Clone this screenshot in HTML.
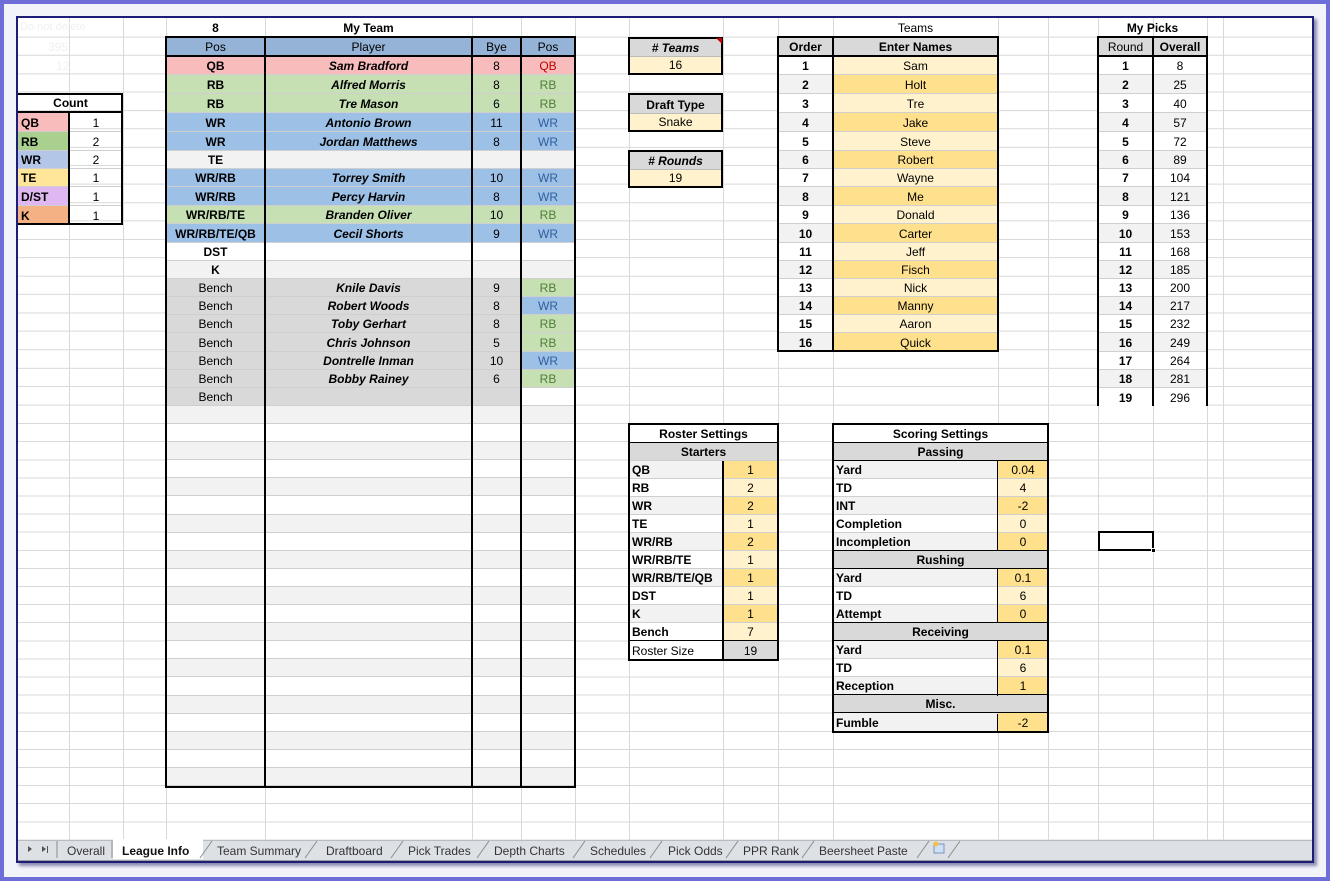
<!DOCTYPE html>
<html><head><meta charset="utf-8"><style>
*{box-sizing:border-box;margin:0;padding:0}
body{width:1330px;height:881px;position:relative;overflow:hidden;background:#f3f3fa;font-family:"Liberation Sans",sans-serif;font-size:12px;color:#000}
.a{position:absolute}
#outer{left:0;top:0;width:1330px;height:881px;border:4px solid #6e6ed8}
#sheet{left:16px;top:16px;width:1298px;height:847px;border:2px solid #1e1e78;background:#fff;overflow:hidden;box-shadow:3px 3px 3px #8a8ab0}
.grid{left:0;top:0;width:1294px;height:822px;
 background-image:
 repeating-linear-gradient(to bottom,transparent 0,transparent 17.4px,#d9d9d9 17.4px,#d9d9d9 18.4px);
 background-position:0 1px;}
.grid2{left:0;top:388px;width:1294px;height:436px;background:#fff;
 background-image:repeating-linear-gradient(to bottom,transparent 0,transparent 17.1px,#d9d9d9 17.1px,#d9d9d9 18.1px);}
.vl{position:absolute;top:0;width:1px;height:822px;background:#d9d9d9}
.t{position:absolute;display:flex;flex-direction:column}
.r{display:flex;border-bottom:1px solid #cfcfcf}
.r>div{text-align:center;display:flex;align-items:center;justify-content:center;white-space:nowrap;padding-top:1px}
.b{font-weight:bold}
.bi{font-weight:bold;font-style:italic}
.L{justify-content:flex-start!important;padding-left:3px}
.bk{position:absolute;background:#000}
.pk{background:#f8bcbc}.gr{background:#c6e0b4}.bl{background:#9dc0e6}.lg{background:#f2f2f2}.gy{background:#d9d9d9}.wh{background:#fff}
.y1{background:#fff2cc}.y2{background:#ffe08c}
.hb{background:#95b3d7}
.tr{color:#c00000}.tg{color:#4f7d35}.tb{color:#2f5f9e}
.tab{position:absolute;top:844px;font-size:12px;color:#333}
</style></head><body>
<div class="a" id="outer"></div>
<div class="a" id="sheet">
<div class="a grid"></div>
<div class="a grid2"></div>
<div class="vl" style="left:51px"></div><div class="vl" style="left:105px"></div><div class="vl" style="left:148px"></div><div class="vl" style="left:247px"></div><div class="vl" style="left:454px"></div><div class="vl" style="left:503px"></div><div class="vl" style="left:557px"></div><div class="vl" style="left:611px"></div><div class="vl" style="left:705px"></div><div class="vl" style="left:760px"></div><div class="vl" style="left:815px"></div><div class="vl" style="left:980px"></div><div class="vl" style="left:1030px"></div><div class="vl" style="left:1080px"></div><div class="vl" style="left:1135px"></div><div class="vl" style="left:1189px"></div><div class="vl" style="left:1205px"></div>
<div class="a" style="left:0;top:822px;width:1294px;height:21px;background:#dde1e6;border-top:1px solid #b8bcc2;border-bottom:1px solid #9aa0a0"></div>
</div>

<div class="a" style="left:20px;top:21px;color:#f0f0f0;font-size:11px">Do not delete</div>
<div class="a" style="left:48px;top:40px;color:#f0f0f0">395</div>
<div class="a" style="left:56px;top:59px;color:#f0f0f0">12</div>

<div class="a b" style="left:166px;top:21px;width:99px;text-align:center">8</div>
<div class="a b" style="left:265px;top:21px;width:207px;text-align:center">My Team</div>
<div class="a" style="left:833px;top:21px;width:165px;text-align:center">Teams</div>
<div class="a b" style="left:1098px;top:21px;width:109px;text-align:center">My Picks</div>

<!-- Count table -->
<div class="t" style="left:18px;top:94px;width:105px">
<div class="r" style="height:19px;border-bottom:2px solid #000"><div style="width:105px" class="b">Count</div></div>
<div class="r" style="height:19px"><div class="pk L b" style="width:51px">QB</div><div style="width:54px">1</div></div>
<div class="r" style="height:19px"><div class="gr L b" style="width:51px;background:#a9d08e">RB</div><div style="width:54px">2</div></div>
<div class="r" style="height:18px"><div class="L b" style="width:51px;background:#b4c6e7">WR</div><div style="width:54px">2</div></div>
<div class="r" style="height:18px"><div class="L b" style="width:51px;background:#ffe699">TE</div><div style="width:54px">1</div></div>
<div class="r" style="height:19px"><div class="L b" style="width:51px;background:#dfb8f2">D/ST</div><div style="width:54px">1</div></div>
<div class="r" style="height:18px;border:0"><div class="L b" style="width:51px;background:#f4b183">K</div><div style="width:54px">1</div></div>
</div>
<div class="bk" style="left:18px;top:93px;width:105px;height:2px"></div>
<div class="bk" style="left:18px;top:223px;width:105px;height:2px"></div>
<div class="bk" style="left:121px;top:93px;width:2px;height:132px"></div>
<div class="bk" style="left:68px;top:113px;width:2px;height:111px"></div>

<!-- Team table -->
<div class="t" style="left:166px;top:37px;width:409px">
<div class="r hb" style="height:19px"><div style="width:99px">Pos</div><div style="width:207px">Player</div><div style="width:49px">Bye</div><div style="width:54px">Pos</div></div>
<div class="r pk" style="height:19px"><div class="b" style="width:99px">QB</div><div class="bi" style="width:207px">Sam Bradford</div><div style="width:49px">8</div><div class="tr" style="width:54px">QB</div></div>
<div class="r gr" style="height:19px"><div class="b" style="width:99px">RB</div><div class="bi" style="width:207px">Alfred Morris</div><div style="width:49px">8</div><div class="tg" style="width:54px">RB</div></div>
<div class="r gr" style="height:19px"><div class="b" style="width:99px">RB</div><div class="bi" style="width:207px">Tre Mason</div><div style="width:49px">6</div><div class="tg" style="width:54px">RB</div></div>
<div class="r bl" style="height:19px"><div class="b" style="width:99px">WR</div><div class="bi" style="width:207px">Antonio Brown</div><div style="width:49px">11</div><div class="tb" style="width:54px">WR</div></div>
<div class="r bl" style="height:19px"><div class="b" style="width:99px">WR</div><div class="bi" style="width:207px">Jordan Matthews</div><div style="width:49px">8</div><div class="tb" style="width:54px">WR</div></div>
<div class="r lg" style="height:18px"><div class="b" style="width:99px">TE</div><div style="width:207px"></div><div style="width:49px"></div><div style="width:54px"></div></div>
<div class="r bl" style="height:18px"><div class="b" style="width:99px">WR/RB</div><div class="bi" style="width:207px">Torrey Smith</div><div style="width:49px">10</div><div class="tb" style="width:54px">WR</div></div>
<div class="r bl" style="height:19px"><div class="b" style="width:99px">WR/RB</div><div class="bi" style="width:207px">Percy Harvin</div><div style="width:49px">8</div><div class="tb" style="width:54px">WR</div></div>
<div class="r gr" style="height:18px"><div class="b" style="width:99px">WR/RB/TE</div><div class="bi" style="width:207px">Branden Oliver</div><div style="width:49px">10</div><div class="tg" style="width:54px">RB</div></div>
<div class="r bl" style="height:19px"><div class="b" style="width:99px">WR/RB/TE/QB</div><div class="bi" style="width:207px">Cecil Shorts</div><div style="width:49px">9</div><div class="tb" style="width:54px">WR</div></div>
<div class="r wh" style="height:18px"><div class="b" style="width:99px">DST</div><div style="width:207px"></div><div style="width:49px"></div><div style="width:54px"></div></div>
<div class="r lg" style="height:18px"><div class="b" style="width:99px">K</div><div style="width:207px"></div><div style="width:49px"></div><div style="width:54px"></div></div>
<div class="r gy" style="height:18px"><div style="width:99px">Bench</div><div class="bi" style="width:207px">Knile Davis</div><div style="width:49px">9</div><div class="tg gr" style="width:54px">RB</div></div>
<div class="r gy" style="height:18px"><div style="width:99px">Bench</div><div class="bi" style="width:207px">Robert Woods</div><div style="width:49px">8</div><div class="tb bl" style="width:54px">WR</div></div>
<div class="r gy" style="height:18px"><div style="width:99px">Bench</div><div class="bi" style="width:207px">Toby Gerhart</div><div style="width:49px">8</div><div class="tg gr" style="width:54px">RB</div></div>
<div class="r gy" style="height:19px"><div style="width:99px">Bench</div><div class="bi" style="width:207px">Chris Johnson</div><div style="width:49px">5</div><div class="tg gr" style="width:54px">RB</div></div>
<div class="r gy" style="height:18px"><div style="width:99px">Bench</div><div class="bi" style="width:207px">Dontrelle Inman</div><div style="width:49px">10</div><div class="tb bl" style="width:54px">WR</div></div>
<div class="r gy" style="height:18px"><div style="width:99px">Bench</div><div class="bi" style="width:207px">Bobby Rainey</div><div style="width:49px">6</div><div class="tg gr" style="width:54px">RB</div></div>
<div class="r gy" style="height:18px"><div style="width:99px">Bench</div><div style="width:207px"></div><div style="width:49px"></div><div class="wh" style="width:54px"></div></div>
<div class="r lg" style="height:18.1px"></div><div class="r wh" style="height:18.1px"></div><div class="r lg" style="height:18.1px"></div><div class="r wh" style="height:18.1px"></div><div class="r lg" style="height:18.1px"></div><div class="r wh" style="height:18.1px"></div><div class="r lg" style="height:18.1px"></div><div class="r wh" style="height:18.1px"></div><div class="r lg" style="height:18.1px"></div><div class="r wh" style="height:18.1px"></div><div class="r lg" style="height:18.1px"></div><div class="r wh" style="height:18.1px"></div><div class="r lg" style="height:18.1px"></div><div class="r wh" style="height:18.1px"></div><div class="r lg" style="height:18.1px"></div><div class="r wh" style="height:18.1px"></div><div class="r lg" style="height:18.1px"></div><div class="r wh" style="height:18.1px"></div><div class="r lg" style="height:18.1px"></div><div class="r wh" style="height:18.1px"></div><div class="r lg" style="height:18.1px"></div>
</div>
<div class="bk" style="left:165px;top:36px;width:411px;height:2px"></div>
<div class="bk" style="left:165px;top:55px;width:411px;height:2px"></div>
<div class="bk" style="left:165px;top:786px;width:411px;height:2px"></div>
<div class="bk" style="left:165px;top:36px;width:2px;height:752px"></div>
<div class="bk" style="left:264px;top:36px;width:2px;height:752px"></div>
<div class="bk" style="left:471px;top:36px;width:2px;height:752px"></div>
<div class="bk" style="left:520px;top:36px;width:2px;height:752px"></div>
<div class="bk" style="left:574px;top:36px;width:2px;height:752px"></div>

<!-- settings boxes -->
<div class="a" style="left:628px;top:37px;width:95px;height:38px;border:2px solid #000">
 <div class="gy bi" style="height:18px;text-align:center;font-size:12px;line-height:19px;border-bottom:1px solid #bbb">#&nbsp;Teams</div>
 <div class="y1" style="height:16px;text-align:center;line-height:17px">16</div>
 <div class="a" style="right:-1px;top:-1px;width:0;height:0;border-top:6px solid #c00000;border-left:6px solid transparent"></div>
</div>
<div class="a" style="left:628px;top:93px;width:95px;height:39px;border:2px solid #000">
 <div class="gy b" style="height:19px;text-align:center;line-height:20px;border-bottom:1px solid #bbb">Draft Type</div>
 <div class="y1" style="height:16px;text-align:center;line-height:17px">Snake</div>
</div>
<div class="a" style="left:628px;top:150px;width:95px;height:38px;border:2px solid #000">
 <div class="gy bi" style="height:18px;text-align:center;font-size:12px;line-height:19px;border-bottom:1px solid #bbb">#&nbsp;Rounds</div>
 <div class="y1" style="height:16px;text-align:center;line-height:17px">19</div>
</div>

<!-- Teams table -->
<div class="t" style="left:778px;top:37px;width:220px">
<div class="r gy b" style="height:19px"><div style="width:55px">Order</div><div style="width:165px">Enter Names</div></div>
<div class="r" style="height:19px"><div class="b wh" style="width:55px">1</div><div class="y1" style="width:165px">Sam</div></div>
<div class="r" style="height:19px"><div class="b lg" style="width:55px">2</div><div class="y2" style="width:165px">Holt</div></div>
<div class="r" style="height:19px"><div class="b wh" style="width:55px">3</div><div class="y1" style="width:165px">Tre</div></div>
<div class="r" style="height:19px"><div class="b lg" style="width:55px">4</div><div class="y2" style="width:165px">Jake</div></div>
<div class="r" style="height:19px"><div class="b wh" style="width:55px">5</div><div class="y1" style="width:165px">Steve</div></div>
<div class="r" style="height:18px"><div class="b lg" style="width:55px">6</div><div class="y2" style="width:165px">Robert</div></div>
<div class="r" style="height:18px"><div class="b wh" style="width:55px">7</div><div class="y1" style="width:165px">Wayne</div></div>
<div class="r" style="height:19px"><div class="b lg" style="width:55px">8</div><div class="y2" style="width:165px">Me</div></div>
<div class="r" style="height:18px"><div class="b wh" style="width:55px">9</div><div class="y1" style="width:165px">Donald</div></div>
<div class="r" style="height:19px"><div class="b lg" style="width:55px">10</div><div class="y2" style="width:165px">Carter</div></div>
<div class="r" style="height:18px"><div class="b wh" style="width:55px">11</div><div class="y1" style="width:165px">Jeff</div></div>
<div class="r" style="height:18px"><div class="b lg" style="width:55px">12</div><div class="y2" style="width:165px">Fisch</div></div>
<div class="r" style="height:18px"><div class="b wh" style="width:55px">13</div><div class="y1" style="width:165px">Nick</div></div>
<div class="r" style="height:18px"><div class="b lg" style="width:55px">14</div><div class="y2" style="width:165px">Manny</div></div>
<div class="r" style="height:18px"><div class="b wh" style="width:55px">15</div><div class="y1" style="width:165px">Aaron</div></div>
<div class="r" style="height:19px;border:0"><div class="b lg" style="width:55px">16</div><div class="y2" style="width:165px">Quick</div></div>
</div>
<div class="bk" style="left:777px;top:36px;width:222px;height:2px"></div>
<div class="bk" style="left:777px;top:55px;width:222px;height:2px"></div>
<div class="bk" style="left:777px;top:350px;width:222px;height:2px"></div>
<div class="bk" style="left:777px;top:36px;width:2px;height:316px"></div>
<div class="bk" style="left:832px;top:36px;width:2px;height:316px"></div>
<div class="bk" style="left:997px;top:36px;width:2px;height:316px"></div>

<!-- My Picks -->
<div class="t" style="left:1098px;top:37px;width:109px">
<div class="r gy" style="height:19px"><div style="width:55px">Round</div><div class="b" style="width:54px">Overall</div></div>
<div class="r wh" style="height:19px"><div class="b" style="width:55px">1</div><div style="width:54px">8</div></div>
<div class="r lg" style="height:19px"><div class="b" style="width:55px">2</div><div style="width:54px">25</div></div>
<div class="r wh" style="height:19px"><div class="b" style="width:55px">3</div><div style="width:54px">40</div></div>
<div class="r lg" style="height:19px"><div class="b" style="width:55px">4</div><div style="width:54px">57</div></div>
<div class="r wh" style="height:19px"><div class="b" style="width:55px">5</div><div style="width:54px">72</div></div>
<div class="r lg" style="height:18px"><div class="b" style="width:55px">6</div><div style="width:54px">89</div></div>
<div class="r wh" style="height:18px"><div class="b" style="width:55px">7</div><div style="width:54px">104</div></div>
<div class="r lg" style="height:19px"><div class="b" style="width:55px">8</div><div style="width:54px">121</div></div>
<div class="r wh" style="height:18px"><div class="b" style="width:55px">9</div><div style="width:54px">136</div></div>
<div class="r lg" style="height:19px"><div class="b" style="width:55px">10</div><div style="width:54px">153</div></div>
<div class="r wh" style="height:18px"><div class="b" style="width:55px">11</div><div style="width:54px">168</div></div>
<div class="r lg" style="height:18px"><div class="b" style="width:55px">12</div><div style="width:54px">185</div></div>
<div class="r wh" style="height:18px"><div class="b" style="width:55px">13</div><div style="width:54px">200</div></div>
<div class="r lg" style="height:18px"><div class="b" style="width:55px">14</div><div style="width:54px">217</div></div>
<div class="r wh" style="height:18px"><div class="b" style="width:55px">15</div><div style="width:54px">232</div></div>
<div class="r lg" style="height:19px"><div class="b" style="width:55px">16</div><div style="width:54px">249</div></div>
<div class="r wh" style="height:18px"><div class="b" style="width:55px">17</div><div style="width:54px">264</div></div>
<div class="r lg" style="height:18px"><div class="b" style="width:55px">18</div><div style="width:54px">281</div></div>
<div class="r wh" style="height:18px;border:0"><div class="b" style="width:55px">19</div><div style="width:54px">296</div></div>
</div>
<div class="bk" style="left:1097px;top:36px;width:111px;height:2px"></div>
<div class="bk" style="left:1097px;top:55px;width:111px;height:2px"></div>
<div class="bk" style="left:1097px;top:36px;width:2px;height:370px"></div>
<div class="bk" style="left:1152px;top:36px;width:2px;height:370px"></div>
<div class="bk" style="left:1206px;top:36px;width:2px;height:370px"></div>

<div class="a" style="left:1098px;top:531px;width:56px;height:20px;border:2px solid #000"></div>
<div class="a" style="left:1151px;top:548px;width:5px;height:5px;background:#000;border:1px solid #fff"></div>

<!-- Roster Settings -->
<div class="t" style="left:629px;top:424px;width:149px">
<div class="r wh b" style="height:19px;border-bottom:1px solid #000"><div style="width:149px">Roster Settings</div></div>
<div class="r gy b" style="height:18px"><div style="width:149px">Starters</div></div>
<div class="r" style="height:18px"><div class="lg b L" style="width:94px">QB</div><div class="y2" style="width:55px">1</div></div>
<div class="r" style="height:18px"><div class="wh b L" style="width:94px">RB</div><div class="y1" style="width:55px">2</div></div>
<div class="r" style="height:18px"><div class="lg b L" style="width:94px">WR</div><div class="y2" style="width:55px">2</div></div>
<div class="r" style="height:18px"><div class="wh b L" style="width:94px">TE</div><div class="y1" style="width:55px">1</div></div>
<div class="r" style="height:18px"><div class="lg b L" style="width:94px">WR/RB</div><div class="y2" style="width:55px">2</div></div>
<div class="r" style="height:18px"><div class="wh b L" style="width:94px">WR/RB/TE</div><div class="y1" style="width:55px">1</div></div>
<div class="r" style="height:18px"><div class="lg b L" style="width:94px">WR/RB/TE/QB</div><div class="y2" style="width:55px">1</div></div>
<div class="r" style="height:18px"><div class="wh b L" style="width:94px">DST</div><div class="y1" style="width:55px">1</div></div>
<div class="r" style="height:18px"><div class="lg b L" style="width:94px">K</div><div class="y2" style="width:55px">1</div></div>
<div class="r" style="height:18px;border-bottom:1px solid #000"><div class="wh b L" style="width:94px">Bench</div><div class="y1" style="width:55px">7</div></div>
<div class="r" style="height:18px;border:0"><div class="wh L" style="width:94px">Roster Size</div><div class="gy" style="width:55px">19</div></div>
</div>
<div class="a" style="left:628px;top:423px;width:151px;height:238px;border:2px solid #000"></div>
<div class="bk" style="left:722px;top:461px;width:2px;height:199px"></div>

<!-- Scoring Settings -->
<div class="t" style="left:833px;top:424px;width:215px">
<div class="r wh b" style="height:19px;border-bottom:1px solid #000"><div style="width:215px">Scoring Settings</div></div>
<div class="r gy b" style="height:18px;border-bottom:1px solid #000"><div style="width:215px">Passing</div></div>
<div class="r" style="height:18px"><div class="lg b L" style="width:165px">Yard</div><div class="y2" style="width:50px">0.04</div></div>
<div class="r" style="height:18px"><div class="wh b L" style="width:165px">TD</div><div class="y1" style="width:50px">4</div></div>
<div class="r" style="height:18px"><div class="lg b L" style="width:165px">INT</div><div class="y2" style="width:50px">-2</div></div>
<div class="r" style="height:18px"><div class="wh b L" style="width:165px">Completion</div><div class="y1" style="width:50px">0</div></div>
<div class="r" style="height:18px;border-bottom:1px solid #000"><div class="lg b L" style="width:165px">Incompletion</div><div class="y2" style="width:50px">0</div></div>
<div class="r gy b" style="height:18px;border-bottom:1px solid #000"><div style="width:215px">Rushing</div></div>
<div class="r" style="height:18px"><div class="lg b L" style="width:165px">Yard</div><div class="y2" style="width:50px">0.1</div></div>
<div class="r" style="height:18px"><div class="wh b L" style="width:165px">TD</div><div class="y1" style="width:50px">6</div></div>
<div class="r" style="height:18px;border-bottom:1px solid #000"><div class="lg b L" style="width:165px">Attempt</div><div class="y2" style="width:50px">0</div></div>
<div class="r gy b" style="height:18px;border-bottom:1px solid #000"><div style="width:215px">Receiving</div></div>
<div class="r" style="height:18px"><div class="lg b L" style="width:165px">Yard</div><div class="y2" style="width:50px">0.1</div></div>
<div class="r" style="height:18px"><div class="wh b L" style="width:165px">TD</div><div class="y1" style="width:50px">6</div></div>
<div class="r" style="height:18px;border-bottom:1px solid #000"><div class="lg b L" style="width:165px">Reception</div><div class="y2" style="width:50px">1</div></div>
<div class="r gy b" style="height:18px;border-bottom:1px solid #000"><div style="width:215px">Misc.</div></div>
<div class="r" style="height:18px;border:0"><div class="lg b L" style="width:165px">Fumble</div><div class="y2" style="width:50px">-2</div></div>
</div>
<div class="a" style="left:832px;top:423px;width:217px;height:310px;border:2px solid #000"></div>
<div class="bk" style="left:997px;top:461px;width:1px;height:90px"></div>
<div class="bk" style="left:997px;top:569px;width:1px;height:54px"></div>
<div class="bk" style="left:997px;top:641px;width:1px;height:55px"></div>
<div class="bk" style="left:997px;top:714px;width:1px;height:18px"></div>

<!-- tabs -->
<div class="a" style="left:113px;top:839px;width:90px;height:20px;background:#fff"></div>
<svg class="a" style="left:0;top:838px" width="1000" height="22">
 <path d="M28 8 l4 3 l-4 3z M42 8 l4 3 l-4 3z" fill="#555"/><rect x="47" y="8" width="1" height="7" fill="#555"/>
 <g stroke="#8a8a8a" fill="none">
 <path d="M57 3 V20"/><path d="M112 3 V20"/><path d="M200 20 L212 3"/><path d="M305 20 L317 3"/><path d="M391 20 L403 3"/><path d="M477 20 L489 3"/><path d="M573 20 L585 3"/><path d="M650 20 L662 3"/><path d="M726 20 L738 3"/><path d="M802 20 L814 3"/><path d="M917 20 L929 3"/><path d="M948 20 L960 3"/>
 </g>
 <rect x="934" y="6" width="10" height="9" fill="#cfe0f5" stroke="#7a94b8"/><circle cx="936" cy="6" r="2.5" fill="#f3c340"/>
</svg>
<div class="tab" style="left:67px">Overall</div>
<div class="tab b" style="left:122px;color:#111">League Info</div>
<div class="tab" style="left:217px">Team Summary</div>
<div class="tab" style="left:326px">Draftboard</div>
<div class="tab" style="left:408px">Pick Trades</div>
<div class="tab" style="left:494px">Depth Charts</div>
<div class="tab" style="left:590px">Schedules</div>
<div class="tab" style="left:668px">Pick Odds</div>
<div class="tab" style="left:743px">PPR Rank</div>
<div class="tab" style="left:819px">Beersheet Paste</div>
</body></html>
